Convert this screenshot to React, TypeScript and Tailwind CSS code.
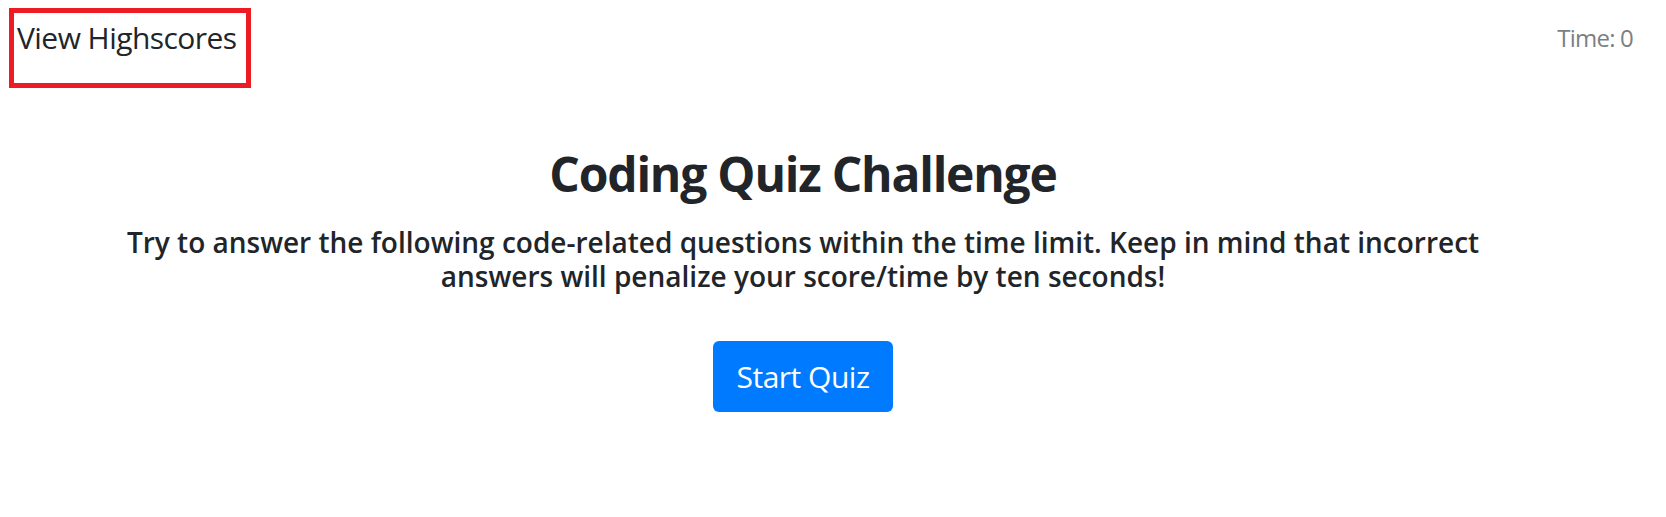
export default function App() {
    return (
        <div className="min-h-screen bg-white text-[#212529] font-['Open_Sans','Liberation_Sans',sans-serif]">
            <header className="flex justify-between items-start">
                <div className="ml-[9px] mt-[8px] w-[242px] h-[80px] border-[5px] border-[#ed1c24] pl-[3px] pt-[7px]">
                    <a href="#" className="block text-[30px] leading-[36px] tracking-[-0.55px] text-[#212529]">View Highscores</a>
                </div>
                <div className="mr-[33px] mt-[20px] text-[24px] leading-[36px] tracking-[-0.8px] text-[#7a7f85]">Time: 0</div>
            </header>

            <main className="mt-[56px] pr-[60px] flex flex-col items-center text-center">
                <h1 className="text-[48px] leading-[60px] tracking-[-1.2px] font-bold">Coding Quiz Challenge</h1>
                <p className="mt-[21px] text-[28px] leading-[34px] font-semibold">
                    Try to answer the following code-related questions within the time limit. Keep in mind that incorrect
                    <br />
                    answers will penalize your score/time by ten seconds!
                </p>
                <button className="mt-[48px] w-[180px] h-[71px] rounded-[6px] bg-[#007bff] text-white text-[30px] leading-[36px] tracking-[-0.5px]">
                    Start Quiz
                </button>
            </main>
        </div>
    )
}
